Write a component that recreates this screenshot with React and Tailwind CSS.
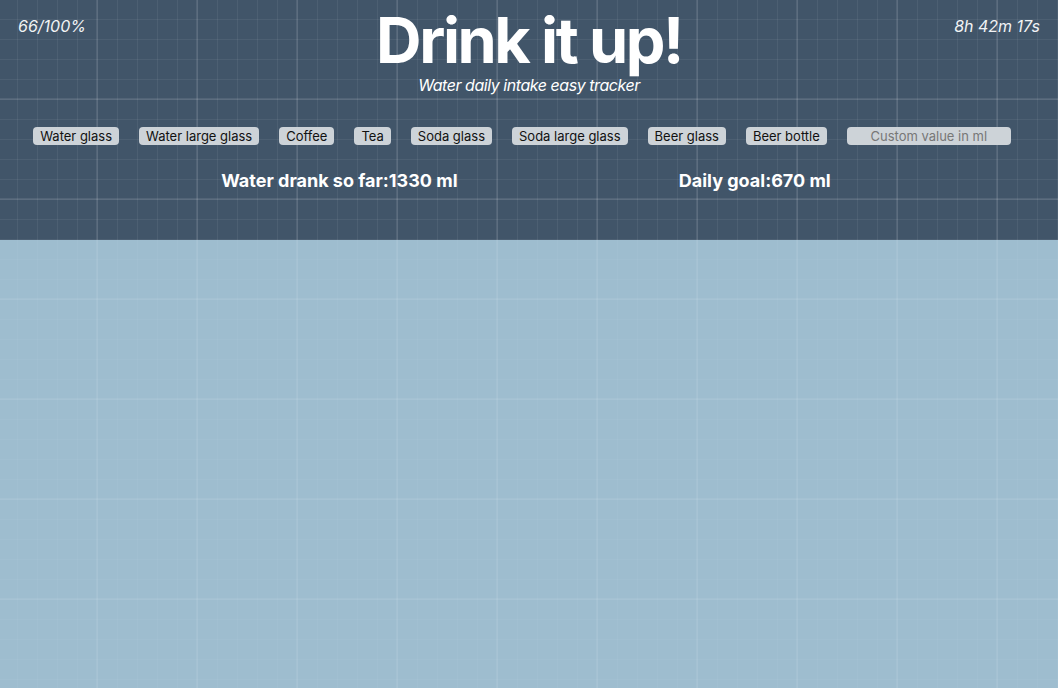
const drinks = [
  'Water glass',
  'Water large glass',
  'Coffee',
  'Tea',
  'Soda glass',
  'Soda large glass',
  'Beer glass',
  'Beer bottle',
];

export default function App() {
  return (
    <div className="flex min-h-screen flex-col font-['Inter','Liberation_Sans',sans-serif]">
      <header className="relative h-[240px] bg-[#415569] bg-fixed bg-[image:linear-gradient(to_right,rgba(255,255,255,0.09)_2px,transparent_2px),linear-gradient(to_bottom,rgba(255,255,255,0.09)_2px,transparent_2px),linear-gradient(to_right,rgba(255,255,255,0.06)_1px,transparent_1px),linear-gradient(to_bottom,rgba(255,255,255,0.06)_1px,transparent_1px)] bg-[size:100px_100px,100px_100px,20px_20px,20px_20px] bg-[position:-4px_-2px,-4px_-2px,-3px_-1px,-3px_-1px]">
        <div className="flex items-start justify-between px-[18px] pt-[14px] text-base italic leading-6 text-[#f1f3f5]">
          <span>66/100%</span>
          <span>8h 42m 17s</span>
        </div>
        <div className="-mt-[29px] flex flex-col items-center text-white">
          <h1 className="text-[63px] font-bold leading-none tracking-[-2.4px]">Drink it up!</h1>
          <p className="mt-px text-base italic leading-6 tracking-[-0.45px]">Water daily intake easy tracker</p>
        </div>
        <div className="mt-[30px] flex items-center justify-center gap-5 pr-[14px]">
          {drinks.map((name) => (
            <button
              key={name}
              type="button"
              className="h-[18px] rounded-[4px] bg-[#cdd3d8] px-[7px] text-[13px] leading-[18px] text-[#111]"
            >
              {name}
            </button>
          ))}
          <input
            type="text"
            placeholder="Custom value in ml"
            className="h-[18px] w-[164px] rounded-[4px] bg-[#cdd3d8] text-center text-[13px] leading-[18px] text-[#111] placeholder:text-[#777]"
          />
        </div>
        <div className="mt-[24px] flex justify-evenly pr-[6px] text-lg font-bold leading-6 text-white">
          <span>Water drank so far:1330 ml</span>
          <span>Daily goal:670 ml</span>
        </div>
      </header>
      <main className="flex-1 bg-[#9ebdcf] bg-fixed bg-[image:linear-gradient(to_right,rgba(255,255,255,0.06)_2px,transparent_2px),linear-gradient(to_bottom,rgba(255,255,255,0.06)_2px,transparent_2px),linear-gradient(to_right,rgba(255,255,255,0.035)_1px,transparent_1px),linear-gradient(to_bottom,rgba(255,255,255,0.035)_1px,transparent_1px)] bg-[size:100px_100px,100px_100px,20px_20px,20px_20px] bg-[position:-4px_-2px,-4px_-2px,-3px_-1px,-3px_-1px]" />
    </div>
  );
}
